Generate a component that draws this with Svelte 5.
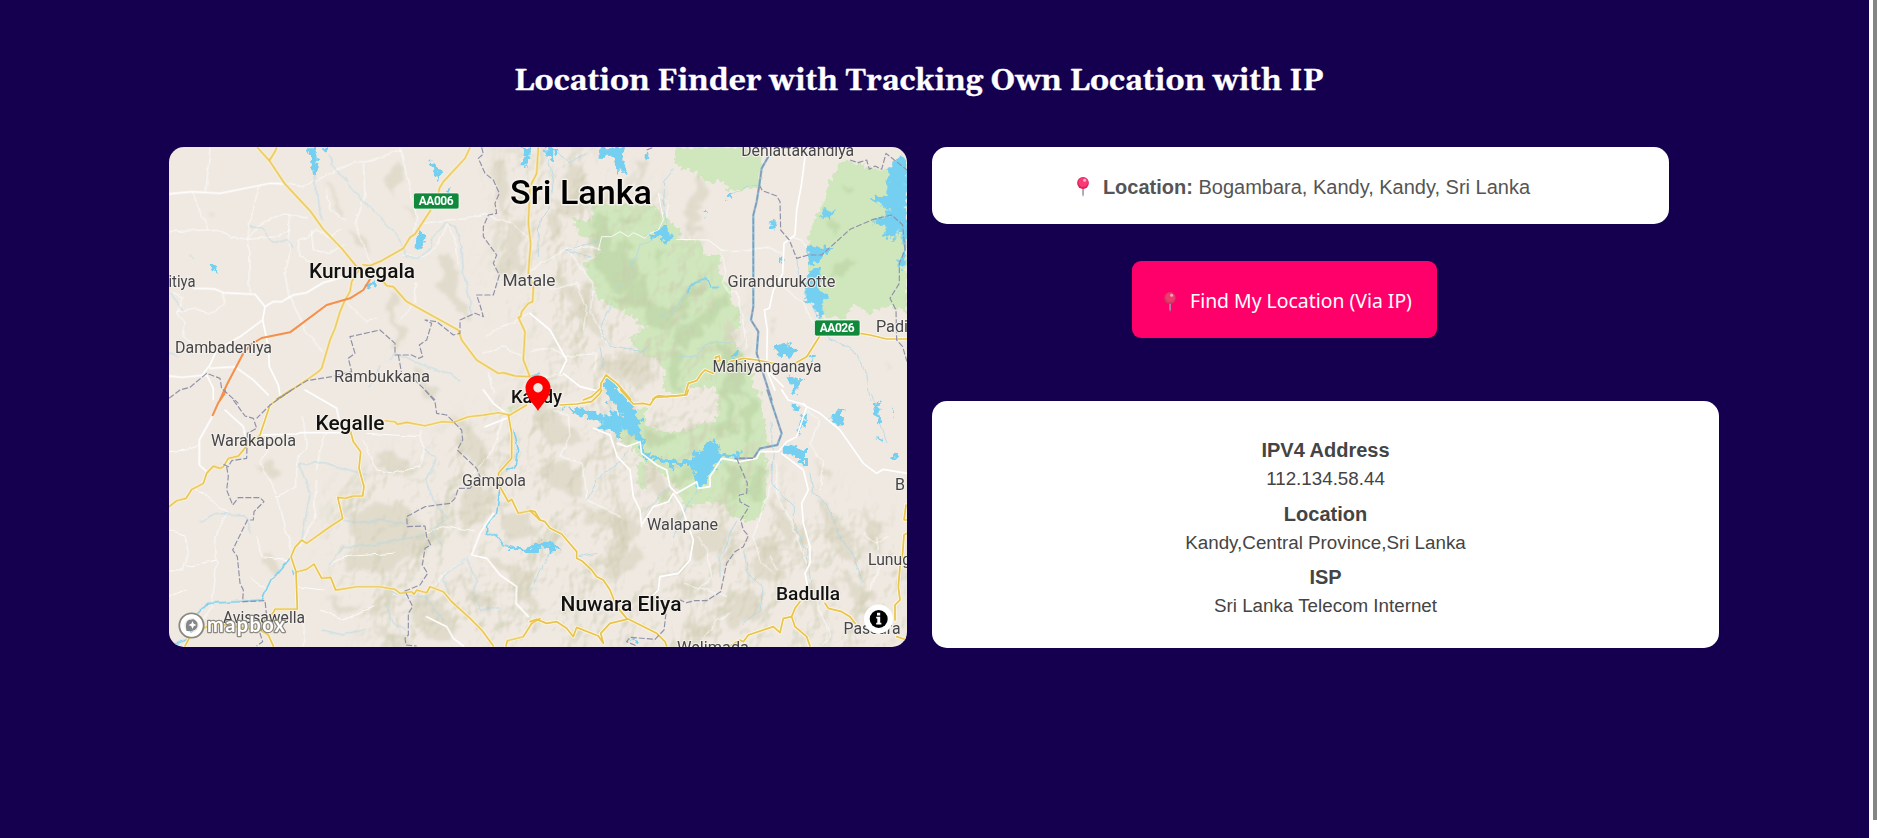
<script>
  // Map geometry is split in four tiles; path units are a third of a pixel.
  const tiles = {
    nw: 'translate(160 140) scale(.333333)',
    ne: 'translate(530 140) scale(.333333)',
    sw: 'translate(160 390) scale(.333333)',
    se: 'translate(530 390) scale(.333333)'
  };

  const parks = [
    ['ne', 'M432 22 L1131 22 L1131 60 L1060 90 L1020 85 L985 65 L925 65 L915 95 L880 140 L875 195 L850 245 L833 300 L835 450 L875 530 L940 535 L980 490 L1010 520 L1060 500 L1100 500 L1131 520 L1131 22 L720 22 L690 135 L650 150 L600 150 L570 120 L530 130 L490 95 L432 70 Z'],
    ['ne', 'M185 190 L365 192 L400 225 L445 268 L450 300 L510 302 L525 345 L570 345 L568 400 L600 440 L600 480 L632 510 L630 560 L600 575 L620 620 L640 650 L665 690 L672 790 L560 800 L560 740 L480 745 L460 770 L400 750 L405 690 L380 660 L330 640 L300 595 L350 565 L290 520 L250 500 L205 480 L180 420 L160 380 L215 330 L195 295 L150 290 L130 235 L185 240 Z'],
    ['se', 'M565 0 L690 0 L705 120 L715 160 L690 180 L712 215 L705 350 L680 390 L640 395 L600 380 L580 345 L520 335 L465 355 L450 310 L420 270 L330 200 L270 145 L258 85 L345 50 L345 100 L420 130 L490 115 L525 90 L560 100 Z'],
    ['se', 'M320 220 L350 225 L350 305 L325 285 Z M370 340 L415 295 L425 330 Z'],
    ['sw', 'M1045 50 L1062 58 L1058 66 L1042 62 Z']
  ];

  const clearings = [
    ['ne', 'M700 22 L985 22 L970 60 L925 65 L900 120 L875 195 L845 250 L830 320 L700 250 L690 135 Z M985 22 L1080 22 L1050 80 L1015 85 L985 60 Z']
  ];

  const water = [
    ['nw', 'M438 22 L465 22 L476 95 L460 105 L452 50 Z M485 22 L508 22 L500 34 Z M803 65 L820 65 L848 105 L838 120 Z M862 145 L875 145 L874 158 L864 158 Z M772 275 L785 272 L795 305 L780 330 L766 325 Z M152 370 L170 375 L176 403 L158 392 Z M625 430 L648 420 L640 440 L620 447 Z M1088 22 L1110 22 L1105 80 L1085 75 L1098 50 Z'],
    ['ne', 'M40 25 L82 25 L70 65 L55 50 Z M210 22 L285 22 L280 60 L287 95 L265 95 L245 50 L205 50 Z M345 35 L357 40 L352 62 Z M585 165 L608 165 L605 180 L583 175 Z M512 212 L530 212 L525 227 Z M720 245 L735 238 L730 270 L718 265 Z M747 350 L760 350 L755 370 Z M345 292 L390 265 L405 248 L418 252 L415 280 L442 290 L415 300 L412 318 L390 295 Z'],
    ['ne', 'M1100 48 L1131 60 L1131 335 L1118 385 L1098 375 L1120 335 L1112 260 L1100 300 L1060 290 L1068 255 L1022 250 L1055 232 L1080 222 L1065 200 L1015 175 L1065 170 L1075 90 Z M870 235 L885 200 L895 215 L920 215 L890 232 Z M832 320 L910 325 L875 355 L850 380 L833 370 Z M838 390 L870 385 L868 450 L900 465 L878 490 L878 530 L860 530 L852 490 L823 475 L828 440 Z'],
    ['ne', 'M732 625 L765 605 L800 628 L775 650 L742 645 Z M843 645 L858 645 L855 662 L844 660 Z M770 700 L790 715 L820 715 L795 765 Z M223 722 L245 720 L280 775 L300 790 L235 780 Z M615 630 L627 630 L622 652 L602 655 Z'],
    ['se', 'M238 0 L272 5 L315 50 L320 85 L340 95 L325 115 L345 155 L340 190 L395 205 L430 205 L440 215 L485 205 L495 175 L510 190 L530 160 L555 150 L570 190 L600 195 L625 185 L630 200 L575 205 L540 250 L528 270 L535 285 L500 290 L485 225 L430 225 L425 240 L410 220 L350 205 L330 190 L332 155 L270 110 L275 150 L240 120 L200 125 L195 110 L225 100 L150 75 L95 50 L180 62 L240 80 L235 50 L280 85 Z'],
    ['se', 'M785 0 L800 5 L793 15 Z M785 40 L800 38 L808 65 L785 60 Z M812 80 L830 70 L830 105 L800 140 L808 105 Z M760 165 L790 170 L825 180 L825 230 L790 195 L758 185 Z M905 75 L940 50 L938 105 L905 100 Z M1030 45 L1050 40 L1053 100 L1038 90 Z M1085 50 L1095 65 L1090 80 Z M1038 138 L1055 145 L1050 155 Z M1082 190 L1110 185 L1095 206 Z M0 470 L40 455 L70 460 L100 478 L65 482 L62 490 L50 472 L0 480 Z M302 745 L327 752 L315 762 Z'],
    ['sw', 'M1050 468 L1080 475 L1140 468 L1140 482 L1075 484 L1040 474 Z']
  ];

  const rivers = [
    ['nw', 'M510 45 L515 75 L550 110 L600 180 L635 205 L670 245 L700 275 L725 310 L740 350 L780 350 L810 330 L820 290 L860 248 L885 260 L905 320 L910 400 L930 480 L930 520 M465 105 L475 200 L490 240 M270 260 L305 265 L340 310 L385 295 L398 325 M88 345 L102 357 M27 455 L70 510 M27 640 L50 650 M690 660 L705 640 L760 665 L850 695 L900 720 M660 680 L630 740'],
    ['ne', 'M80 30 L115 70 L165 40 M55 60 L70 120 L60 210 L30 240 L25 350 M430 90 L405 120 L400 200 L410 250 M200 305 L110 330 L180 350 M600 165 L650 140 L685 135 M370 295 L325 320 L305 380 L310 410 L250 460 M390 530 L435 510 L470 450 M250 490 L210 560 L240 620 L340 635 L360 615 M210 620 L220 680 M440 650 L500 650 L530 610 L610 605 M800 350 L805 400 L840 490 L900 595 L970 630 L1010 700 L1020 778'],
    ['sw', 'M415 220 L490 218 L620 255 M415 220 L450 310 L425 450 M120 395 L170 370 L255 375 L270 430 M505 530 L550 470 L640 465 L790 435 M550 390 L600 400 L650 390 L735 400 M790 180 L830 205 L800 270 L820 330 L860 385 L815 425 L850 470 M920 505 L850 560 L860 600 M920 505 L950 570 L940 610 L960 660 L1020 650 M690 600 L720 615 L790 620 L850 690 M485 720 L550 735 L620 715 M680 645 L700 700 L740 720'],
    ['se', 'M285 190 L265 220 L200 270 L170 330 M420 290 L350 360 M500 300 L460 370 L430 440 M720 100 L730 170 L725 280 L790 350 L790 400 L830 480 L845 600 M840 250 L850 310 L890 340 L930 440 L970 500 L1000 580 M1025 10 L1050 90 L1070 155 M620 390 L570 500 L570 560 M640 480 L655 550 L700 590 L690 660 L640 700 M60 490 L20 560 L0 610 M145 500 L200 490']
  ];

  const streams = [
    ['sw', 'M1055 110 L1073 180 L1065 230 L1040 242 M1020 290 L1010 370 L980 405 L980 435 L1005 430 L1030 465 L1060 472 M390 505 L330 575 L305 630 L235 635 L140 640 L105 680 L85 750 L30 768 M398 540 L400 550'],
    ['ne', 'M470 455 L495 425 L530 415 L540 440 L565 440 M0 710 L25 700']
  ];

  const lanes = [
    ['nw', 'M150 22 L138 155 M27 275 L175 268 L210 290 L265 298 L350 290 L390 270 M95 160 L145 270 M300 135 L265 250 L268 460 M265 298 L300 250 L370 225 L440 230 M385 230 L390 340 L375 400 L385 460 L440 580 L490 635 M415 300 L440 290 L470 270 L510 290 L540 270 M415 300 L420 350 L455 365 M455 275 L460 330 L510 340 L555 315 M720 22 L750 150 L770 230 L765 280 M720 30 L620 65 L585 65 L500 105 L430 140 L375 132 M500 150 L510 210 L560 240 M610 70 L615 170 L585 250 L610 320 L635 370 M790 250 L860 240 L930 235 L975 220 L1020 240 L1060 250 L1100 290 M730 345 L790 350 L830 320 L865 250 L890 320 L895 370 M27 455 L70 470 L50 520 L75 550 L70 590 L110 620 M50 515 L100 505 L150 520 L190 490 L190 460 M555 480 L620 545 L650 535 M720 540 L760 490 L770 430 M980 590 L1020 560 L1060 550 L1105 520 M970 640 L1030 620 L1090 650 M985 700 L1000 760'],
    ['ne', 'M0 390 L55 360 L110 325 L180 320 L210 330 M115 330 L150 380 L190 430 L180 520 L240 620 M385 160 L415 190 L410 230 M575 330 L610 335 L720 320 L760 345 M570 340 L590 390 L580 430 L600 460 L620 455 L640 550 L650 620 M780 290 L815 300 L830 320 M760 440 L820 490 L850 550 M60 450 L140 430 L170 500 L160 570 M0 635 L60 620 L100 645 M100 650 L200 640 L190 690 M30 710 L100 705'],
    ['sw', 'M165 440 L200 370 L130 310 L95 298 M165 440 L170 520 L155 650 L130 690 M27 420 L75 435 L85 490 L70 540 L27 540 M80 530 L170 510 M350 310 L300 220 L330 170 L370 130 M350 320 L370 400 L395 480 M350 320 L410 290 L410 200 L440 180 L430 80 M470 270 L460 390 L420 470 M470 240 L480 180 L500 130 M290 440 L310 500 L390 510 M265 560 L320 600 M800 430 L850 410 L940 425 M780 120 L790 180 L780 230 L700 250 L650 240 L610 150 M620 130 L780 140 M1030 80 L1000 180 L940 250 M505 530 L550 500 L700 490 M410 590 L490 600 M435 680 L430 765 M480 660 L550 690 L640 650 M27 620 L80 600 M700 610 L745 620 M930 500 L840 560 L830 590 M27 185 L80 180 L118 160'],
    ['se', 'M70 60 L115 80 L120 140 L90 200 L160 220 L170 330 L270 380 M500 440 L530 480 L545 560 L500 600 M720 290 L670 440 L690 510 L730 550 M740 220 L740 310 L780 390 L830 520 M830 60 L870 90 L840 160 L880 220 L870 300 M740 540 L720 500 M1040 440 L1050 530 L1020 600 M850 610 L900 740 L880 765 M460 580 L530 600 L590 620 M520 750 L560 690 L600 670 M1000 430 L1040 460 L1075 440']
  ];

  const roads = [
    ['nw', 'M27 162 L95 155 L180 160 L330 130 L372 132 M100 445 L165 447 L190 458 L285 463 L315 500 L340 485 L365 485 L400 465 L440 458 L490 428 L560 408 M315 500 L308 540 L240 590 L170 630 L150 675 L130 700 M308 540 L325 620 L328 680 L355 735 L360 765 M150 685 L225 680 L280 720 L325 765 M27 708 L65 712 L140 705 L160 745 L160 778'],
    ['ne', 'M825 50 L815 130 L800 210 L795 285 L775 300 L762 310 L758 400 L730 450 L718 505 L703 510 L712 570 L710 690 L735 750 M0 520 L60 570 L110 660 L90 700 M100 700 L150 740 L212 755 M710 690 L760 740'],
    ['sw', 'M158 78 L118 150 L118 225 L140 245 M300 135 L410 132 L420 128 L540 128 M195 60 L250 110 L260 160 M435 0 L530 55 L545 128 M975 110 L1040 85 M1000 370 L960 430 L935 495 L980 505 L1020 555 L1070 590 L1068 640 L1105 680 M970 0 L1000 40 L1045 75 M800 680 L860 710 L880 745 L910 768'],
    ['se', 'M190 115 L240 135 L262 200 L300 240 L310 320 L330 360 L335 410 M262 160 L290 170 L330 155 L335 190 L380 225 L410 240 L420 290 L440 310 L500 275 L505 295 L540 290 L540 260 L575 205 L630 215 L680 205 L690 185 L745 185 L770 155 L800 140 L830 50 L820 40 M755 0 L775 30 L810 40 L870 70 L930 120 L1000 220 L1040 250 L1060 238 L1131 250 M755 190 L820 240 L835 300 L815 340 L820 400 L840 470 L840 520 L825 550 L835 600 M430 310 L415 335 L370 350 L335 405 M430 310 L455 350 L490 450 L480 510 L445 550 L390 560 L385 600 L355 630']
  ];

  const trails = [
    ['ne', 'M385 160 L400 240 L385 270 L360 280 L345 295 L310 278 L295 290 L270 275 L245 290 L215 290 L205 330 M440 298 L535 300 L575 330']
  ];

  const highways = [
    ['nw', 'M292 22 L328 62 L375 132 L450 212 L490 268 L545 325 L590 380 M350 22 L345 35 L328 62 M930 22 L915 55 L850 125 L838 145 L835 165 M812 210 L765 282 L750 292 L730 325 L665 362 L630 377 L608 374 M600 385 L575 425 L570 455 L555 480 L540 515 L525 565 L510 600 L485 685 L475 695 L440 720 L350 778 M670 425 L680 437 L700 440 L740 485 L895 570 L905 600 L950 660 L1015 700 L1030 698 L1065 708 L1105 710 M1135 22 L1130 100 L1110 140 L1105 250 L1112 310 L1105 400 L1120 440 L1118 485 L1105 490 L1085 515 L1082 530 L1075 532 L1095 575 L1090 660 L1110 710'],
    ['sw', 'M390 2 L330 45 L300 135 L262 165 L235 198 L205 205 L190 230 L180 235 L160 228 L140 250 L130 280 L95 298 L78 325 L50 332 L27 350 M675 92 L705 95 L712 103 L740 97 L795 107 L845 95 L880 97 L925 80 L970 75 L1015 68 L1050 75 L1100 45 M570 118 L580 155 L602 185 L597 235 L612 290 L608 318 L580 318 L555 325 L533 322 L548 385 L510 410 L440 460 L425 450 L405 472 L393 500 L408 545 L412 657 L345 657 L340 668 L300 700 M412 545 L440 538 L462 522 L485 565 L512 562 L527 600 L590 590 L660 590 L705 598 L720 610 L755 605 L762 613 L770 600 L800 608 L810 590 L850 605 L875 635 L930 685 L965 720 L1000 768 M1045 75 L1055 130 L1055 205 L1015 250 L1020 290 L1045 335 L1055 328 L1075 370 L1110 362 L1140 390 M75 768 L90 740 L130 715 L160 700 L300 720 L325 735 L340 768 M1038 768 L1042 752 L1090 740 L1115 700 L1140 685'],
    ['ne', 'M160 780 L185 770 L212 745 L213 730 L228 705 L260 730 L302 778 M368 778 L380 772 L430 768 L465 765 L475 730 L500 722 L515 700 L525 690 L550 700 M600 665 L640 655 L680 660 L740 672 M795 670 L830 650 L868 590 M990 580 L1020 585 L1070 597 L1131 597 M556 652 L568 648 L570 662 L558 665 Z'],
    ['se', 'M90 45 L140 42 L185 35 L210 10 L215 0 M272 0 L310 42 L340 40 L360 45 L375 22 L385 17 L410 20 L470 15 L475 0 M0 362 L15 365 L30 390 L45 395 L60 415 L95 432 L140 485 L140 505 L155 512 L185 540 L200 560 L220 570 L240 600 L260 650 L290 685 L350 715 L380 730 L405 755 L410 768 M0 695 L20 688 L50 700 L80 695 L110 715 L130 740 L140 712 L205 738 L220 760 L212 730 L240 700 L290 688 M600 768 L630 750 L640 755 L655 735 L730 710 L750 728 L760 685 L785 680 L795 655 L810 635 M785 680 L795 710 L830 740 L840 768 M885 640 L895 655 L935 665 L960 680 L975 700 M1128 345 L1122 390 L1131 390 M1131 430 L1122 435 L1118 490 L1110 530 L1105 590 L1110 630 L1095 645 L1095 690 M1100 740 L1131 750']
  ];

  const borders = [
    ['nw', 'M965 22 L970 42 L955 55 L975 100 L1000 120 L1018 160 L1005 190 L1010 220 L985 225 L970 260 L970 290 L1010 345 L1000 370 L1018 405 L1000 465 L950 465 L960 495 L970 530 L945 520 L900 540 L900 580 L880 585 L830 545 L795 540 L815 550 L800 600 L778 615 L788 650 L775 655 L755 645 L705 645 L705 610 L660 570 L570 590 L585 640 L565 655 L575 695 L515 710 L440 722 L350 778 M715 645 L725 700 L760 715 L825 780 M27 775 L60 750 L90 742 L140 700 L180 715 L185 745 L235 790'],
    ['sw', 'M220 30 L255 78 L280 85 L290 115 L262 130 L260 205 L215 212 L205 230 L185 220 M200 230 L205 260 L200 300 L218 345 L235 323 L300 323 L312 335 L282 365 L280 390 L262 390 L218 480 L232 500 L240 580 L250 600 L248 635 L315 632 L320 680 L300 730 L308 755 L290 768 M395 0 L330 45 L290 85 M795 0 L825 35 L830 70 L860 75 L905 120 L908 150 L892 180 L950 235 L960 260 L930 295 L895 295 L885 325 L870 340 L795 350 L740 380 L742 410 L795 408 L800 440 L812 465 L795 475 L787 525 L803 550 L780 585 L735 603 L758 650 L745 670 L745 735 L735 745 L738 765 L770 768'],
    ['ne', 'M688 135 L697 152 L740 168 L750 185 L752 270 L778 300 L800 355 L835 345 L875 345 L960 268 L1030 238 L1085 225 L1118 255 L1125 330 L1108 370 L1108 430 L1080 475 L1098 510 L1100 600 L1118 620 L1131 665 M960 60 L985 68 L1010 60 L1018 88 L1035 78 L1055 88 L1068 40 L1131 90 M350 30 L370 22'],
    ['se', 'M620 205 L635 240 L652 280 L650 310 L628 315 L630 335 L657 350 L632 390 L640 420 L655 437 L640 470 L615 485 L590 520 L572 605 L530 632 L495 632 L470 638 L450 630 M408 670 L402 720 L375 748 L300 742 L290 755 L320 768']
  ];

  const canal = [
    ['ne', 'M715 50 L695 85 L688 135 L680 185 L670 225 L670 500 L663 540 L685 575 L680 640 L725 780'],
    ['se', 'M712 0 L755 130 L742 165 L690 175 L670 205 L615 205']
  ];

  const motorway = [
    ['nw', 'M630 418 L610 450 L570 475 L500 495 L390 577 L305 594 L275 612 L250 640 L200 735 L180 780'],
    ['sw', 'M195 0 L193 12 L175 38 L158 76']
  ];

  const relief = [
    ['nw', 'M680 100 L710 60 L725 110 L710 180 L690 150 Z M500 140 L530 180 L560 230 L520 210 Z M590 290 L610 290 L620 350 Z M730 180 L760 200 L750 240 Z M830 340 L880 350 L900 480 L930 560 L860 480 Z M690 450 L720 470 L710 540 L740 600 L700 620 Z M1000 60 L1050 60 L1040 220 L1010 200 Z M1030 260 L1090 240 L1080 420 L1020 380 Z M760 690 L800 700 L830 770 L790 770 Z M140 215 L158 220 L145 235 Z'],
    ['ne', 'M100 80 L150 70 L200 170 L90 230 Z M310 60 L350 70 L330 180 Z M490 90 L520 100 L510 280 L470 240 Z M40 230 L90 220 L80 330 Z M60 400 L180 440 L230 600 L180 580 Z M200 650 L370 650 L360 740 L230 700 Z M720 550 L745 560 L730 585 Z M1050 670 L1075 675 L1060 690 Z M580 560 L610 550 L610 610 L590 600 Z'],
    ['sw', 'M640 210 L750 200 L770 240 L690 260 Z M560 380 L700 330 L780 400 L590 460 Z M610 420 L790 410 L780 500 L640 550 L560 520 Z M880 70 L960 130 L980 250 L900 170 Z M920 300 L980 270 L990 370 L900 440 Z M990 500 L1110 530 L1130 660 L1060 600 Z M760 620 L850 640 L900 720 L840 760 L760 700 Z M310 490 L340 500 L330 550 L300 520 Z M500 630 L620 660 L540 680 Z M300 220 L370 240 L340 270 Z M1020 350 L1130 400 L1120 450 L1040 440 Z M900 550 L1000 640 L970 690 Z M630 680 L690 740 L760 760 L690 768 Z'],
    ['se', 'M0 60 L100 80 L180 160 L80 180 Z M60 200 L170 250 L150 320 L40 260 Z M90 330 L250 390 L330 360 L280 480 L230 520 L260 430 Z M200 530 L320 470 L350 500 L250 560 Z M480 440 L560 410 L590 480 L510 520 Z M420 580 L540 570 L520 620 Z M650 470 L730 440 L780 560 L700 590 Z M860 320 L950 420 L970 530 L900 460 Z M920 560 L1000 590 L1060 680 L950 640 Z M560 640 L680 610 L700 690 L600 710 Z M330 220 L400 240 L420 320 L350 310 Z M470 690 L570 720 L500 750 Z M710 300 L760 370 L820 410 L770 480 Z M1000 350 L1060 430 L1030 500 Z M860 200 L910 250 L890 290 Z']
  ];

  const greenRelief = [
    ['ne', 'M180 210 L240 230 L230 330 L290 290 L330 400 L260 470 L200 380 Z M300 420 L370 410 L350 500 L260 490 Z M350 470 L420 520 L480 440 L520 440 L420 570 L340 560 Z M440 560 L540 500 L600 440 L580 510 L480 620 L420 600 Z M380 310 L410 330 L370 390 Z M260 200 L340 240 L280 260 Z M560 610 L640 640 L650 770 L600 760 Z M400 610 L470 640 L440 740 L410 700 Z M880 420 L970 350 L975 375 L930 410 Z M920 140 L950 150 L930 170 Z M905 250 L930 260 L905 285 Z M1110 470 L1131 490 L1131 520 Z'],
    ['se', 'M590 0 L620 10 L600 150 L570 140 Z M645 0 L680 30 L670 140 L640 120 Z M580 210 L620 230 L640 300 L600 330 Z M660 220 L705 240 L690 350 L655 320 Z M350 100 L440 160 L380 180 Z M440 240 L500 250 L450 290 Z M290 100 L320 140 L300 150 Z']
  ];

  const towns = [
    ['Dehiattakandiya', 797.7, 156, 113], ['itiya', 168.5, 287, 27, 'start'],
    ['Matale', 529, 286, 53], ['Girandurukotte', 781.5, 287, 108],
    ['Dambadeniya', 223.5, 353, 97], ['Rambukkana', 382, 382, 96],
    ['Mahiyanganaya', 767, 372, 109], ['Padi', 876, 332, 32, 'start'],
    ['Warakapola', 253.5, 446, 85], ['Gampola', 494, 486, 64],
    ['Walapane', 682.5, 530, 71], ['B', 895, 490, 10, 'start'],
    ['Lunug', 868, 565, 43, 'start'], ['Avissawella', 264, 623, 82],
    ['Passara', 872, 634, 57], ['Welimada', 713, 653, 72]
  ];

  const cities = [
    ['Kurunegala', 362, 278, 106, 20.5], ['Kegalle', 350, 430, 69, 20.5],
    ['Kandy', 536.5, 403, 51, 18.5], ['Nuwara Eliya', 621, 611, 121, 20.5],
    ['Badulla', 808, 599.5, 64, 18]
  ];

  const shields = [['AA006', 414, 193], ['AA026', 815, 320]];

  const details = [
    ['IPV4 Address', '112.134.58.44'],
    ['Location', 'Kandy,Central Province,Sri Lanka'],
    ['ISP', 'Sri Lanka Telecom Internet']
  ];
</script>

{#snippet layer(cls, items)}
  <g class={cls}>
    {#each items as [tile, d]}
      <path transform={tiles[tile]} {d} />
    {/each}
  </g>
{/snippet}

{#snippet pushpin(muted)}
  <svg class="pushpin" class:muted viewBox="0 0 12 20" aria-hidden="true">
    <path d="M5.2 10h1.700v7.5L6 20l-.8-2.500z" fill="#a09cae" />
    <circle cx="6" cy="6" r="5.9" fill={muted ? '#cf3a62' : '#dd2459'} />
    <circle cx="6.200" cy="5.300" r="4.800" fill={muted ? '#e8446f' : '#f83a76'} />
    <circle cx="7.600" cy="3.200" r="1.500" fill="#ffb5ca" />
  </svg>
{/snippet}

<div class="page">
  <main>
    <h1>Location Finder with Tracking Own Location with IP</h1>
    <div class="columns">
      <section class="map">
        <svg viewBox="169 147 738 500" width="738" height="500">
          <defs>
            <filter id="coast" x="-5%" y="-5%" width="110%" height="110%">
              <feTurbulence type="fractalNoise" baseFrequency="0.18" numOctaves="2" seed="4" />
              <feDisplacementMap in="SourceGraphic" scale="11" xChannelSelector="R" yChannelSelector="G" />
            </filter>
            <filter id="wobble" x="-5%" y="-5%" width="110%" height="110%">
              <feTurbulence type="fractalNoise" baseFrequency="0.09" numOctaves="2" seed="8" />
              <feDisplacementMap in="SourceGraphic" scale="5" xChannelSelector="R" yChannelSelector="G" />
            </filter>
            <filter id="soft" x="-5%" y="-5%" width="110%" height="110%">
              <feTurbulence type="fractalNoise" baseFrequency="0.05" numOctaves="3" seed="2" />
              <feDisplacementMap in="SourceGraphic" scale="26" xChannelSelector="R" yChannelSelector="G" />
              <feGaussianBlur stdDeviation="1.6" />
            </filter>
            <filter id="hills" x="0" y="0" width="100%" height="100%">
              <feTurbulence type="fractalNoise" baseFrequency="0.026 0.02" numOctaves="4" seed="11" />
              <feDiffuseLighting surfaceScale="13" lighting-color="#fff">
                <feDistantLight azimuth="225" elevation="48" />
              </feDiffuseLighting>
              <feColorMatrix values="0 0 0 0 .60  0 0 0 0 .59  0 0 0 0 .42  -1.5 0 0 0 1.08" />
            </filter>
            <filter id="feather"><feGaussianBlur stdDeviation="14" /></filter>
            <mask id="highland">
              <path filter="url(#feather)" fill="#fff" d="M500 140 L590 150 L660 200 L735 300 L745 400 L770 480 L850 500 L915 530 L915 660 L380 660 L330 570 L330 490 L420 450 L500 410 L560 340 L490 300 Z" />
            </mask>
          </defs>
          <rect x="169" y="147" width="738" height="500" fill="#efe9e2" />
          <g filter="url(#coast)">{@render layer('park', parks)}{@render layer('clearing', clearings)}</g>
          <g filter="url(#soft)">{@render layer('relief', relief)}{@render layer('green-relief', greenRelief)}</g>
          <g mask="url(#highland)"><rect x="169" y="147" width="738" height="500" filter="url(#hills)" opacity=".65" /></g>
          <g filter="url(#wobble)">{@render layer('lane', lanes)}{@render layer('river', rivers)}{@render layer('stream', streams)}</g>
          <g filter="url(#coast)">{@render layer('water', water)}</g>
          {@render layer('canal', canal)}
          {@render layer('road', roads)}
          {@render layer('lane', trails)}
          {@render layer('highway-case', highways)}
          {@render layer('highway', highways)}
          {@render layer('motorway', motorway)}
          {@render layer('border', borders)}
          {@render layer('border', canal)}

          {#each shields as [name, x, y]}
            <rect x={x - 0.5} y={y} width="45.5" height="16" rx="2" fill="#108a3a" stroke="#fff" stroke-opacity=".7" />
            <text class="shield" x={x + 22.2} y={y + 12.2} textLength="35">{name}</text>
          {/each}
          {#each towns as [name, x, y, w, anchor]}
            <text class="town" {x} {y} textLength={w} lengthAdjust="spacingAndGlyphs" text-anchor={anchor ?? 'middle'}>{name}</text>
          {/each}
          {#each cities as [name, x, y, w, size]}
            <text class="city" {x} {y} textLength={w} lengthAdjust="spacingAndGlyphs" font-size={size}>{name}</text>
          {/each}
          <text class="country" x="581" y="203.500" textLength="142" lengthAdjust="spacingAndGlyphs">Sri Lanka</text>

          <path fill="#f00" fill-rule="evenodd" d="M538 411 C535 405 525.5 398 525.5 388 A12.5 12.5 0 0 1 550.5 388 C550.5 398 541 405 538 411 Z M538 383 a4.7 4.7 0 1 0 .01 0 Z" />

          <circle cx="191.5" cy="625.5" r="12" fill="none" stroke="#8c897f" stroke-width="2.2" />
          <circle cx="191.5" cy="625.5" r="9.2" fill="none" stroke="#fff" stroke-width="4" />
          <path d="M186.5 631 C185 622 187 619.5 192 619.5 A5 5 0 0 1 197.500 625 C197.500 630 193 631.500 186.500 631 Z" fill="#85868a" />
          <path d="M192.500 621 l1.200 2.800 2.800 1.200 -2.800 1.200 -1.200 2.800 -1.200 -2.800 -2.800 -1.200 2.800 -1.200 Z" fill="#fff" />
          <text class="wordmark" x="207" y="632" textLength="78">mapbox</text>

          <circle cx="878.500" cy="619" r="14.500" fill="#fff" />
          <circle cx="878.700" cy="619" r="9" fill="#000" />
          <path d="M877 612.800 h3.200 v2.700 h-3.200 Z M876.200 616.700 h4 v6 h1.200 v1.700 h-5.200 v-1.700 h1.100 v-4.300 h-1.100 Z" fill="#fff" />
        </svg>
      </section>

      <section class="side">
        <div class="card place">
          {@render pushpin(false)}
          <p><b>Location:</b> Bogambara, Kandy, Kandy, Sri Lanka</p>
        </div>
        <button type="button">{@render pushpin(true)}<span>Find My Location (Via IP)</span></button>
        <dl class="card details">
          {#each details as [name, value]}
            <dt>{name}</dt>
            <dd>{value}</dd>
          {/each}
        </dl>
      </section>
    </div>
  </main>
  <div class="scroll"></div>
</div>

<style>
  :global(body) { margin: 0; background: #fff; overflow: hidden; }
  .page { display: flex; height: 838px; font-family: "Liberation Sans", Arial, sans-serif; }
  main { width: 1869px; background: #150050; }
  .scroll { width: 4px; height: 820px; margin-left: 4px; background: #858585; }
  h1 {
    margin: 61px 0 0 514px; height: 86px; width: 809px; white-space: nowrap;
    font: bold 30px/40px Georgia, Gelasio, "Liberation Serif", serif;
    -webkit-text-stroke: .3px #fff;
    color: #fff;
  }
  .columns { display: flex; gap: 25px; margin-left: 169px; }
  .map { width: 738px; height: 500px; border-radius: 15px; overflow: hidden; }
  .map svg { display: block; }
  .side { display: flex; flex-direction: column; align-items: flex-start; width: 787px; }
  .card { box-sizing: border-box; background: #fff; border-radius: 15px; }
  .place { display: flex; align-items: center; justify-content: center; gap: 14px; width: 737px; height: 77px; padding-left: 6px; color: #555; font-size: 20px; }
  .place p { margin: 0; padding-top: 3px; }
  .pushpin { width: 12px; height: 20px; flex: none; position: relative; top: 1px; }
  .muted { opacity: .9; }
  button {
    display: flex; align-items: center; justify-content: center; gap: 14px;
    width: 305px; height: 77px; margin: 37px 0 63px 200px; padding: 3px 0 0 7px;
    border: 0; border-radius: 9px; background: #ff006a; color: #fff;
    font: 19.400px/26px "Noto Sans", Tahoma, sans-serif; white-space: nowrap;
  }
  .details { margin: 0; width: 787px; height: 247px; padding-top: 34px; text-align: center; color: #444; }
  dt { font-weight: bold; font-size: 20px; line-height: 30px; }
  dd { margin: 0 0 6.700px; font-size: 18.800px; line-height: 27px; }

  .park { fill: #d0e7bd; }
  .clearing { fill: #efe9e2; }
  .relief { fill: #d8d3bf; opacity: .6; }
  .green-relief { fill: #b9d3a2; opacity: .6; }
  .water { fill: #75cff0; }
  .lane, .river, .stream, .road, .highway, .highway-case, .motorway, .border, .canal { fill: none; stroke-linejoin: round; stroke-linecap: round; }
  .lane { stroke: #fff; stroke-width: 3; opacity: .85; }
  .river { stroke: #aad6e8; stroke-width: 2.500; opacity: .85; }
  .stream { stroke: #75cff0; stroke-width: 4.500; }
  .canal { stroke: #8bbbd4; stroke-width: 7; }
  .road { stroke: #fff; stroke-width: 5; }
  .highway-case { stroke: #fff8df; stroke-width: 10; }
  .highway { stroke: #e8c34e; stroke-width: 5.200; }
  .motorway { stroke: #f58f49; stroke-width: 6; }
  .border { stroke: #8f91a8; stroke-width: 3.500; stroke-dasharray: 18 6; stroke-linecap: butt; }
  text { font-family: Roboto, "Open Sans", sans-serif; paint-order: stroke; stroke: #f5f1ea; stroke-width: 2px; stroke-linejoin: round; }
  .town { font-size: 17px; fill: #45454a; }
  .city { font-weight: 500; fill: #111; text-anchor: middle; }
  .country { font-size: 34px; font-weight: 500; fill: #000; text-anchor: middle; stroke-width: 3px; }
  .shield { font-size: 12px; font-weight: 700; fill: #fff; stroke: none; text-anchor: middle; }
  .wordmark { font: 700 20px Lato, sans-serif; fill: #fff; stroke: #8c897f; stroke-width: 2.500px; }
</style>
